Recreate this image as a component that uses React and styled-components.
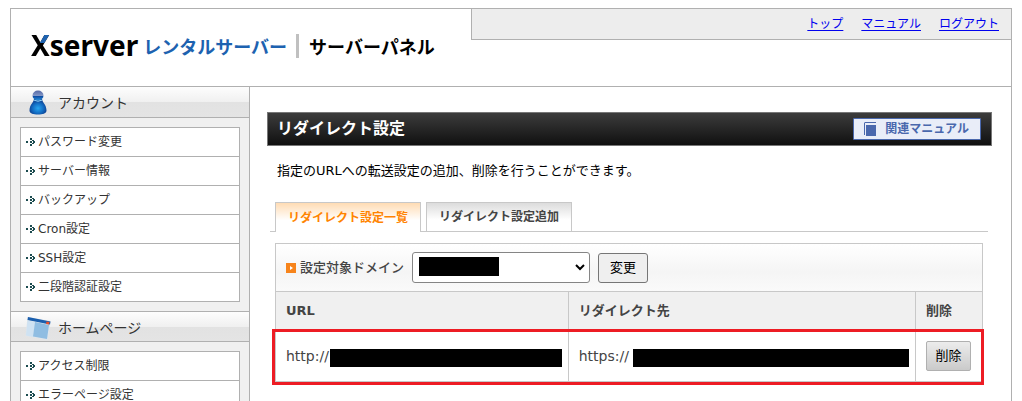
import React from "react";
import styled, { createGlobalStyle } from "styled-components";

const GlobalStyle = createGlobalStyle`
  *, *::before, *::after { box-sizing: border-box; }
  body {
    margin: 0;
    background: #fff;
    color: #333;
    font-family: "DejaVu Sans", "Noto Sans CJK JP", sans-serif;
    font-size: 13px;
    line-height: 20px;
  }
  h1, h2, p, ul { margin: 0; padding: 0; }
  button, select { font: inherit; }
`;

const line = "#b0b0b0";
const tableLine = "#c8c8c8";
const jp = `"Noto Sans CJK JP", sans-serif`;

const Page = styled.div`
  display: flex;
  flex-direction: column;
  height: 100vh;
  padding: 8px 10px 0;
  overflow-y: auto;
  scrollbar-width: none;
`;

const Header = styled.header`
  display: flex;
  flex: none;
  align-items: flex-start;
  height: 79px;
  border: 1px solid ${line};
`;

const Brand = styled.div`
  display: flex;
  align-items: center;
  flex: 0 0 460px;
  height: 74px;
  padding-left: 20px;
  color: #000;
  font: bold 18px/28px ${jp};
`;

const Wordmark = styled.span`
  padding-bottom: 2px;
  font: bold 28px/28px "Noto Sans", sans-serif;
`;

const WordmarkInitial = styled.span`
  color: transparent;
  background: linear-gradient(#1d62b0, #1d62b0) 100% 0 / 50% 46% no-repeat, #000;
  background-clip: text;
  -webkit-background-clip: text;
`;

const Service = styled.span`
  margin-left: 5px;
  color: #1d62b0;
`;

const Divider = styled.span`
  width: 3px;
  height: 24px;
  margin: 0 10px 0 9px;
  background: #c0c0c0;
`;

const TopNav = styled.nav`
  display: flex;
  flex: 1;
  justify-content: flex-end;
  align-items: center;
  gap: 18px;
  height: 31px;
  padding-right: 12px;
  background: #ededed;
  border-left: 1px solid ${line};
  border-bottom: 1px solid ${line};
`;

const TopLink = styled.a`
  color: #00e;
  font-size: 12px;
  text-underline-offset: 2px;
`;

const Body = styled.div`
  display: flex;
  flex: 1 0 auto;
  border: 1px solid ${line};
  border-width: 0 1px;
`;

const Sidebar = styled.aside`
  flex: 0 0 239px;
  background: #f0f0f0;
  border-right: 1px solid ${line};
`;

const Section = styled.section`
  & + & > h2 { border-top: 1px solid ${line}; }
`;

const SectionTitle = styled.h2`
  display: flex;
  align-items: center;
  gap: 7px;
  height: 31px;
  padding-left: 14px;
  border-bottom: 1px solid ${line};
  background: linear-gradient(#fdfdfd, #f0f0f0 50%, #e2e2e2 51%, #e4e4e4);
  font: 14px/20px ${jp};
`;

const Menu = styled.ul`
  margin: 9px;
  border: 1px solid ${line};
  background: #fff;
  list-style: none;
`;

const MenuItem = styled.li`
  & + & { border-top: 1px solid ${line}; }
`;

const MenuLink = styled.a`
  display: flex;
  align-items: center;
  gap: 2px;
  height: 28px;
  padding-left: 4px;
  color: #333;
  font-size: 12px;
  text-decoration: none;
`;

const Main = styled.main`
  flex: 1;
  min-width: 0;
  padding: 25px 19px 16px 17px;
`;

const TitleBar = styled.div`
  display: flex;
  align-items: center;
  justify-content: space-between;
  height: 34px;
  padding: 0 10px 0 9px;
  border: 1px solid #777;
  background: linear-gradient(#3c3c3c, #101010);
`;

const Title = styled.h1`
  color: #fff;
  font-size: 16px;
  line-height: 24px;
`;

const ManualButton = styled.button`
  display: flex;
  align-items: center;
  gap: 9px;
  height: 22px;
  padding: 0 11px 0 10px;
  border: 1px solid #4a68ad;
  border-radius: 1px;
  background: #e9edf8;
  color: #4a68ad;
  font-size: 12px;
  font-weight: bold;
`;

const Lead = styled.p`
  padding: 15px 10px 21px;
  color: #000;
`;

const Tabs = styled.div`
  display: flex;
  align-items: flex-end;
  gap: 5px;
  margin: 0 4px 0 3px;
  padding-left: 5px;
  border-bottom: 1px solid ${tableLine};
`;

const Tab = styled.button`
  width: 146px;
  height: ${(p) => (p.$active ? "30px" : "29px")};
  margin-bottom: ${(p) => (p.$active ? "-1px" : "0")};
  padding: 0;
  border: 1px solid ${tableLine};
  border-bottom: 0;
  background: ${(p) =>
    p.$active ? "linear-gradient(#ffdcb4, #fff 60%)" : "linear-gradient(#dcdcdc, #fff 60%)"};
  color: ${(p) => (p.$active ? "#ff8400" : "#444")};
  font-size: 12px;
  font-weight: bold;
`;

const Panel = styled.div`
  position: relative;
  margin: 11px 9px 0 8px;
  color: #444;
`;

const DomainForm = styled.form`
  display: flex;
  align-items: center;
  height: 48px;
  padding: 0 10px;
  border: 1px solid ${tableLine};
  border-bottom: 0;
  background: linear-gradient(#fff, #f5f5f5 60%, #fafafa);
`;

const DomainLabel = styled.label`
  display: flex;
  align-items: center;
  gap: 4px;
  width: 126px;
  font-weight: 500;
`;

const SelectBox = styled.div`
  position: relative;
  width: 178px;
  margin-right: 8px;
  color: #000;
  & > svg { position: absolute; right: 4px; top: 11px; pointer-events: none; }
`;

const Select = styled.select`
  display: block;
  width: 100%;
  height: 31px;
  appearance: none;
  border: 1px solid #858585;
  border-radius: 3px;
  background: #fff;
`;

const SelectMask = styled.span`
  position: absolute;
  left: 7px;
  top: 5px;
  width: 80px;
  height: 19px;
  background: #000;
  pointer-events: none;
`;

const Button = styled.button`
  height: 30px;
  padding: 0;
  width: ${(p) => (p.$danger ? "45px" : "50px")};
  border: 1px solid ${(p) => (p.$danger ? "#b0b0b0" : "#767676")};
  border-radius: ${(p) => (p.$danger ? "2px" : "3px")};
  background: ${(p) => (p.$danger ? "linear-gradient(#ececec, #cacaca)" : "#efefef")};
  color: #000;
`;

const Table = styled.table`
  width: 100%;
  table-layout: fixed;
  border-collapse: collapse;
`;

const HeadCell = styled.th`
  width: ${(p) => p.$width || "auto"};
  height: 39px;
  padding: 0 10px;
  border: 1px solid ${tableLine};
  background: #f0f0f0;
  text-align: left;
`;

const Cell = styled.td`
  height: 51px;
  padding: 0 6px 0 10px;
  border: 1px solid ${tableLine};
`;

const Address = styled.div`
  display: flex;
  align-items: center;
  font-size: 14px;
`;

const Scheme = styled.span`
  flex: 0 0 ${(p) => p.$width};
`;

const Mask = styled.span`
  flex: 1;
  height: 18px;
  margin-top: 4px;
  background: #000;
`;

const RowHighlight = styled.div`
  position: absolute;
  left: -3px;
  right: -1px;
  bottom: -3px;
  height: 56px;
  border: 3px solid #ed1c24;
  pointer-events: none;
`;

const UserIcon = () => (
  <svg width="26" height="26" viewBox="0 0 26 26" aria-hidden="true">
    <defs>
      <radialGradient id="userBody" cx="50%" cy="60%" r="60%">
        <stop offset="0" stopColor="#27a5ee" />
        <stop offset="0.5" stopColor="#1370c6" />
        <stop offset="1" stopColor="#0b3484" />
      </radialGradient>
      <linearGradient id="userHead" x1="0" y1="0" x2="0" y2="1">
        <stop offset="0" stopColor="#5568a5" />
        <stop offset="0.5" stopColor="#8094c4" />
        <stop offset="0.58" stopColor="#0c4aa2" />
        <stop offset="1" stopColor="#2c95de" />
      </linearGradient>
    </defs>
    <path d="M9 10h8c0 3 4.500 5.500 4.500 11.500 0 3-4 4-8.500 4s-8.500-1-8.500-4C4.500 15.500 9 13 9 10z" fill="url(#userBody)" />
    <ellipse cx="13" cy="6.500" rx="5.500" ry="5" fill="url(#userHead)" />
    <path d="M8.500 11q4.500 2.500 9 0" fill="none" stroke="#8fd0f6" strokeWidth="1" />
  </svg>
);

const WindowIcon = () => (
  <svg width="26" height="26" viewBox="0 0 26 26" aria-hidden="true">
    <path d="M2.500 3L25.500 7 23 26 0.500 22z" fill="#dfe6ec" />
    <path d="M3 3l22.500 4.500-.5 3L2.500 6z" fill="#1b5fae" />
    <path d="M2.500 6.500l7.500 1.500-2 15-7-1.500z" fill="#cfe2f2" />
    <path d="M10 8l14 3-2 14-14-2.500z" fill="#8fbde2" />
    <path d="M21.500 7.500l3 .5-.5 2.500-3-.5z" fill="#e8502c" />
  </svg>
);

const MenuArrow = () => (
  <svg width="11" height="10" viewBox="0 0 11 10" shapeRendering="crispEdges" fill="#1c4c50" aria-hidden="true">
    <path d="M1 4h2v2H1zM5 1h2v2H5zM7 3h2v1H7zM5 4h2v2H5zM8 4h2v2H8zM7 6h2v1H7zM5 7h2v2H5z" />
  </svg>
);

const BookIcon = () => (
  <svg width="12" height="14" viewBox="0 0 12 14" fill="#4a68ad" aria-hidden="true">
    <path d="M1 0h11v1H1v12H0V1zM2 3h10v11H2z" />
  </svg>
);

const Bullet = () => (
  <svg width="10" height="10" viewBox="0 0 10 10" aria-hidden="true">
    <path d="M0 0h10v10H0z" fill="#f7841b" />
    <path d="M4 3l3 2-3 2z" fill="#fff" />
  </svg>
);

const Chevron = () => (
  <svg width="12" height="9" viewBox="0 0 12 9" fill="none" stroke="#000" strokeWidth="2" aria-hidden="true">
    <path d="M2 2l4 4 4-4" />
  </svg>
);

const sections = [
  {
    title: "アカウント",
    Icon: UserIcon,
    items: ["パスワード変更", "サーバー情報", "バックアップ", "Cron設定", "SSH設定", "二段階認証設定"],
  },
  { title: "ホームページ", Icon: WindowIcon, items: ["アクセス制限", "エラーページ設定"] },
];

export default function App() {
  return (
    <Page>
      <GlobalStyle />
      <Header>
        <Brand>
          <Wordmark><WordmarkInitial>X</WordmarkInitial>server</Wordmark>
          <Service>レンタルサーバー</Service>
          <Divider />
          <span>サーバーパネル</span>
        </Brand>
        <TopNav>
          {["トップ", "マニュアル", "ログアウト"].map((t) => (
            <TopLink key={t} href="#">{t}</TopLink>
          ))}
        </TopNav>
      </Header>
      <Body>
        <Sidebar>
          {sections.map(({ title, Icon, items }) => (
            <Section key={title}>
              <SectionTitle><Icon />{title}</SectionTitle>
              <Menu>
                {items.map((item) => (
                  <MenuItem key={item}>
                    <MenuLink href="#"><MenuArrow />{item}</MenuLink>
                  </MenuItem>
                ))}
              </Menu>
            </Section>
          ))}
        </Sidebar>
        <Main>
          <TitleBar>
            <Title>リダイレクト設定</Title>
            <ManualButton type="button"><BookIcon />関連マニュアル</ManualButton>
          </TitleBar>
          <Lead>指定のURLへの転送設定の追加、削除を行うことができます。</Lead>
          <Tabs role="tablist">
            <Tab type="button" role="tab" aria-selected="true" $active>リダイレクト設定一覧</Tab>
            <Tab type="button" role="tab" aria-selected="false">リダイレクト設定追加</Tab>
          </Tabs>
          <Panel>
            <DomainForm>
              <DomainLabel htmlFor="domain"><Bullet />設定対象ドメイン</DomainLabel>
              <SelectBox>
                <Select id="domain"><option /></Select>
                <SelectMask />
                <Chevron />
              </SelectBox>
              <Button type="button">変更</Button>
            </DomainForm>
            <Table>
              <thead>
                <tr>
                  <HeadCell $width="41.4%">URL</HeadCell>
                  <HeadCell>リダイレクト先</HeadCell>
                  <HeadCell $width="67px">削除</HeadCell>
                </tr>
              </thead>
              <tbody>
                <tr>
                  <Cell><Address><Scheme $width="44px">http://</Scheme><Mask /></Address></Cell>
                  <Cell><Address><Scheme $width="54px">https://</Scheme><Mask /></Address></Cell>
                  <Cell><Button type="button" $danger>削除</Button></Cell>
                </tr>
              </tbody>
            </Table>
            <RowHighlight />
          </Panel>
        </Main>
      </Body>
    </Page>
  );
}
